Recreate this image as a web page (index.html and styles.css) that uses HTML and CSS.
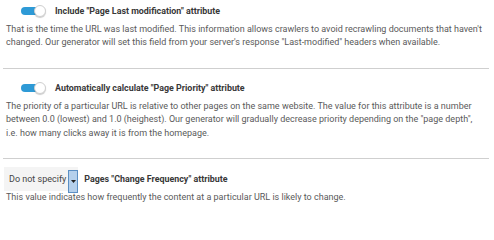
FILE: index.html
```html
<!DOCTYPE html>
<html>
<head>
<meta charset="utf-8">
<link rel="stylesheet" href="styles.css">
</head>
<body>
<div class="page">
  <section class="opt">
    <div class="head">
      <span class="toggle"><span class="knob"></span></span>
      <span class="title">Include "Page Last modification" attribute</span>
    </div>
    <p class="desc">That is the time the URL was last modified. This information allows crawlers to avoid recrawling documents that haven't changed. Our generator will set this field from your server's response "Last-modified" headers when available.</p>
  </section>
  <hr class="sep">
  <section class="opt">
    <div class="head">
      <span class="toggle"><span class="knob"></span></span>
      <span class="title">Automatically calculate "Page Priority" attribute</span>
    </div>
    <p class="desc">The priority of a particular URL is relative to other pages on the same website. The value for this attribute is a number between 0.0 (lowest) and 1.0 (heighest). Our generator will gradually decrease priority depending on the "page depth", i.e. how many clicks away it is from the homepage.</p>
  </section>
  <hr class="sep">
  <section class="opt">
    <div class="head sel-head">
      <span class="select"><span class="sel-text">Do not specify</span><span class="sel-btn"><svg width="5" height="3" viewBox="0 0 5 3"><path d="M0 0H5L2.5 3Z" fill="#222"/></svg></span></span>
      <span class="title">Pages "Change Frequency" attribute</span>
    </div>
    <p class="desc desc-last">This value indicates how frequently the content at a particular URL is likely to change.</p>
  </section>
</div>
</body>
</html>
```
FILE: styles.css
```css
html, body {
  margin: 0;
  padding: 0;
  background: #fff;
}
.page {
  padding: 4px 3px 0 3px;
  font-family: Roboto, "Liberation Sans", sans-serif;
}
.opt {
  margin: 0;
}
.head {
  display: flex;
  align-items: center;
  height: 14px;
  padding-left: 18px;
}
.toggle {
  position: relative;
  width: 22px;
  height: 8px;
  border-radius: 4px;
  background: #2e9ad6;
  margin-right: 9px;
}
.knob {
  position: absolute;
  right: -3px;
  top: -2px;
  width: 12px;
  height: 12px;
  box-sizing: border-box;
  border-radius: 50%;
  background: #fff;
  border: 1px solid #d0d0d0;
  box-shadow: 0 1px 1px rgba(0,0,0,0.2);
}
.title {
  font-size: 8.9px;
  font-weight: bold;
  color: #383838;
  margin-left: 3px;
}
.desc {
  margin: 5px 7px 0 3px;
  font-size: 9px;
  line-height: 13.33px;
  color: #5a5a5a;
}
.sep {
  border: 0;
  border-top: 1px solid #cfcfcf;
  margin: 18px 2px 12.33px 0;
}
.sel-head {
  padding-left: 1px;
  height: 24px;
  margin-top: -4.33px;
}
.select {
  display: flex;
  align-items: stretch;
  height: 24px;
  background: #f4f4f4;
  margin-right: 6px;
}
.sel-text {
  display: flex;
  align-items: center;
  padding: 0 2px 0 5px;
  font-size: 9px;
  color: #444;
}
.sel-btn {
  display: flex;
  align-items: center;
  justify-content: center;
  width: 8px;
  margin: 3px 0 -2px 0;
  background: #b5d0ec;
  border: 1px solid #5b8fc4;
}
.sel-head .title {
  margin-left: 0;
}
.desc-last {
  margin-top: 0;
}
```
